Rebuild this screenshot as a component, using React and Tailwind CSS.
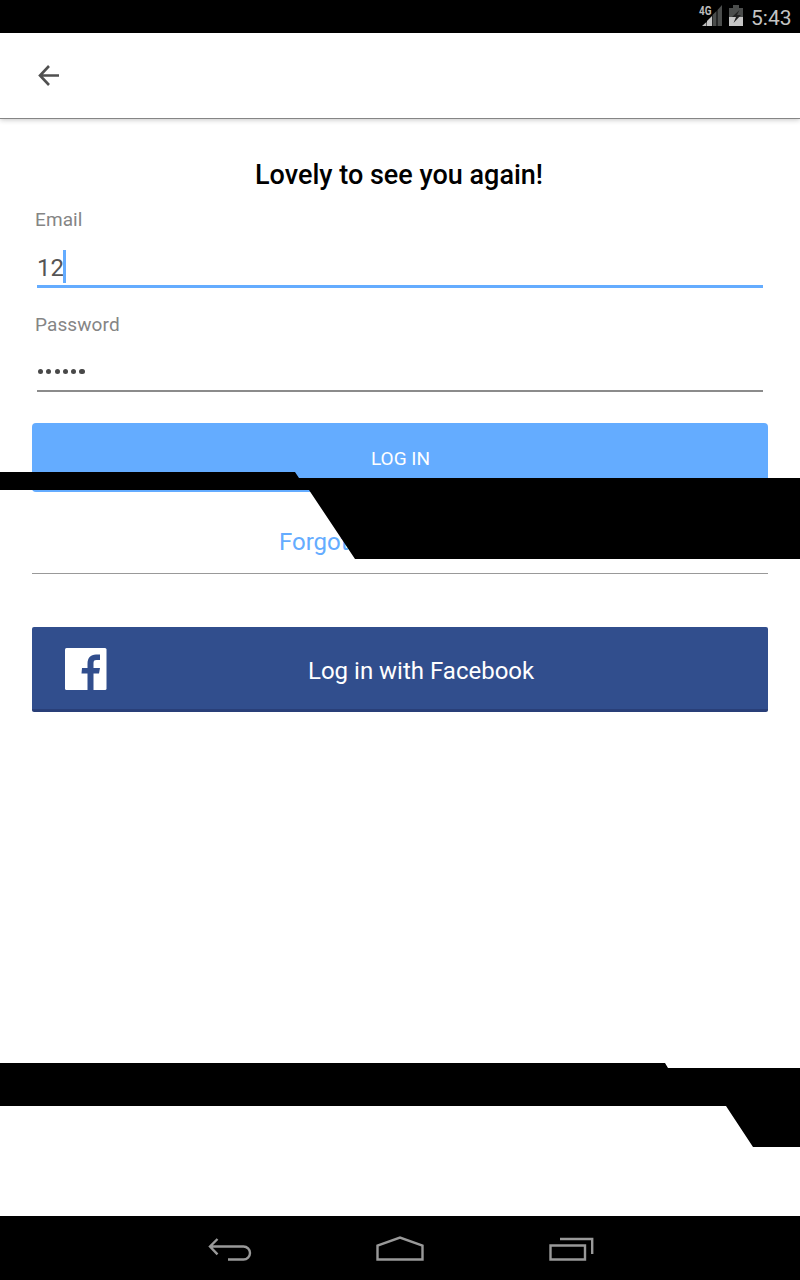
function StatusBar() {
  return (
    <header className="flex h-[33px] shrink-0 items-start justify-end bg-black pr-2">
      <svg className="mt-[5px] h-[22px] w-[24px] overflow-visible" viewBox="0 0 24 22">
        <path d="M2 21 6.5 17v4z" fill="#bcbcbc" />
        <path d="M7 21v-5l5-5v10z" fill="#c6c6c6" />
        <path d="M12.500 21V10l4-4v15zM17.500 21V5l4.500-5v21z" fill="#4b4d4c" />
        <text x="-1" y="10" textLength="12.5" lengthAdjust="spacingAndGlyphs" fontFamily="Roboto, sans-serif" fontWeight="700" fontSize="12" fill="#bcbcbc">4G</text>
      </svg>
      <svg className="mt-[5px] mr-px ml-[5px] h-[22px] w-[14px]" viewBox="0 0 14 22">
        <path d="M0 3h4V0h6v3h4v9H0z" fill="#4b4d4c" />
        <path d="M0 12h14v9H0z" fill="#c6c6c6" />
        <path d="M10.500 5 3 12h4l-2.500 6 7.500-8H8z" fill="#222" />
      </svg>
      <span className="ml-[7px] mt-[4px] w-[41px] text-[21px] leading-[28px] text-[#c4c4c4]">5:43</span>
    </header>
  );
}

function FacebookLogo() {
  return (
    <svg className="mt-[2px] h-[42px] w-[42px] shrink-0" viewBox="0 0 42 42">
      <rect width="41.5" height="42" rx="1.500" fill="#fff" />
      <path d="M22.500 42V25.500H16.500L17 20h5.500v-4c0-6 3-9.500 8.500-9.500h4V12h-3.500c-2.500 0-3 1-3 3.500V20H35l-1 5.500h-5.500V42z" fill="#314e8d" />
    </svg>
  );
}

function NavigationBar() {
  return (
    <nav className="flex h-16 shrink-0 items-center bg-black pt-[2px] pl-[208px]">
      <svg className="h-[28px] w-[44px]" viewBox="0 0 44 28" fill="none" stroke="#999" strokeWidth="2.4">
        <path d="M2 11.5h33.5a6.5 6.5 0 0 1 0 13H20M9.5 4 2 11.5l7.5 7.8" />
      </svg>
      <svg className="ml-[124px] h-[28px] w-[48px]" viewBox="0 0 48 28" fill="none" stroke="#999" strokeWidth="2.4">
        <path d="M1.5 24.5v-14L24 2.5l22.5 8v14z" />
      </svg>
      <svg className="ml-[125px] h-[28px] w-[46px]" viewBox="0 0 46 28" fill="none" stroke="#999" strokeWidth="2.4">
        <path d="M1.5 10.5H36v14H1.5zM11 4h32.2v15" />
      </svg>
    </nav>
  );
}

export default function App() {
  return (
    <div className="relative flex h-[1280px] w-[800px] flex-col overflow-hidden bg-white font-[Roboto,sans-serif]">
      <StatusBar />
      <div className="z-10 flex h-[86px] shrink-0 items-center border-b border-[#858585] bg-white pl-[38px] shadow-[0_1px_5px_rgba(0,0,0,0.22)]">
        <svg className="h-[22px] w-[22px]" viewBox="0 0 22 22" fill="none" stroke="#505050" strokeWidth="2.6">
          <path d="M21 10.500H2M11 1 2 10.500l9 9.500" />
        </svg>
      </div>
      <main className="flex flex-1 flex-col px-8">
        <h1 className="mt-[38px] h-[36px] pr-[2px] text-center text-[27px] leading-[36px] font-medium text-black">
          Lovely to see you again!
        </h1>
        <label className="mt-[15px] ml-[3px] h-[24px] text-[19px] leading-[24px] tracking-[0.1px] text-[#858585]">Email</label>
        <div className="mx-[5px] mt-[15px] flex h-[41px] items-start border-b-[3px] border-[#64acff]">
          <span className="mt-[7px] w-[26px] text-[24px] leading-[28px] whitespace-nowrap text-[#555]">12</span>
          <span className="mt-[3px] h-[33px] w-[3px] bg-[#64acff]" />
        </div>
        <label className="mt-[25px] ml-[3px] h-[24px] text-[19px] leading-[24px] tracking-[0.1px] text-[#858585]">Password</label>
        <div className="mx-[5px] mt-[14px] flex h-[41px] items-start gap-[3.100px] border-b-2 border-[#8b8b8b] pt-[18px] pl-[1px]">
          {[0, 1, 2, 3, 4, 5].map((dot) => (
            <span key={dot} className="h-[5.200px] w-[5.200px] rounded-full bg-[#484848]" />
          ))}
        </div>
        <button className="mt-[31px] h-[69px] rounded-[4px] bg-[#64acff] pt-[4px] pl-px text-[19px] text-white">LOG IN</button>
        <div className="mt-[36px] h-[46px] border-b border-[#999] pl-[247px] text-[24px] leading-[28px] text-[#64acff]">Forgot</div>
        <button className="mt-[53px] flex h-[85px] items-center rounded-[2px] border-b-[3px] border-[#293f78] bg-[#314e8d] pl-[33px]">
          <FacebookLogo />
          <span className="ml-[201px] pt-[5px] text-[24px] leading-[28px] text-white">Log in with Facebook</span>
        </button>
      </main>
      <NavigationBar />
      <div className="absolute top-[472px] left-0 z-20 h-[87px] w-[800px] bg-black [clip-path:polygon(0_0,295px_0,299px_6px,800px_6px,800px_87px,355px_87px,309px_18px,0_18px)]" />
      <div className="absolute top-[1063px] left-0 z-20 h-[84px] w-[800px] bg-black [clip-path:polygon(0_0,665px_0,668px_5px,800px_5px,800px_84px,753px_84px,726px_43px,0_43px)]" />
    </div>
  );
}
